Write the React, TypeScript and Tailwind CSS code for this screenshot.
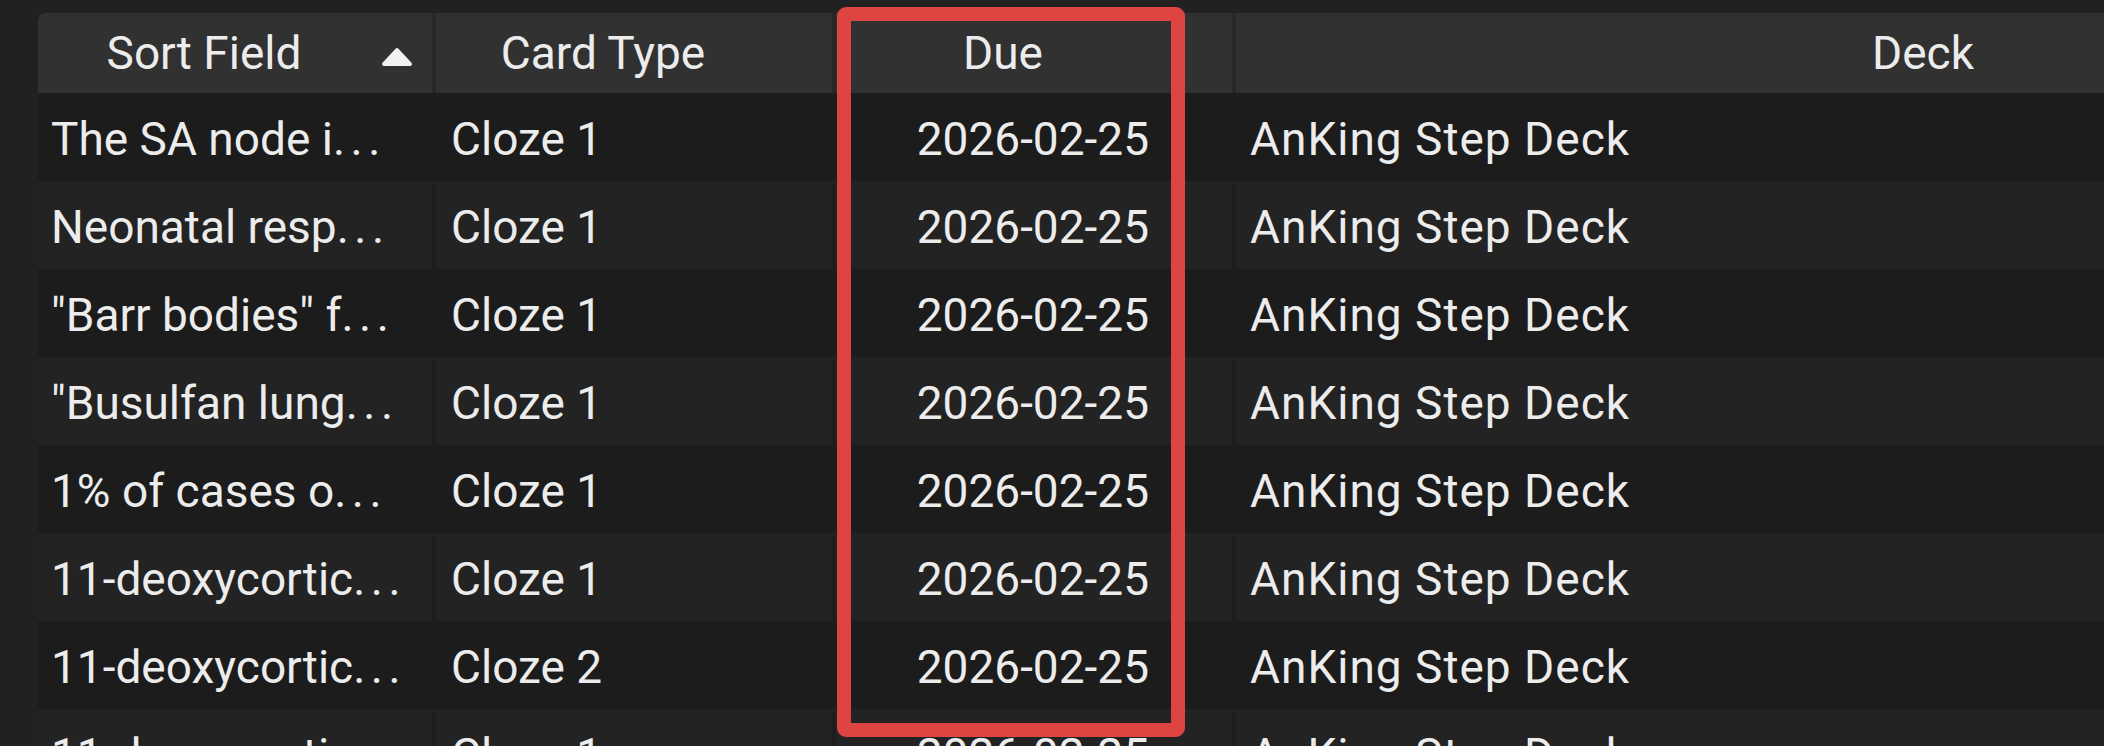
import React from 'react';

type Row = { sort: string; type: string; due: string; deck: string };

const rows: Row[] = [
  { sort: 'The SA node i', type: 'Cloze 1', due: '2026-02-25', deck: 'AnKing Step Deck' },
  { sort: 'Neonatal resp', type: 'Cloze 1', due: '2026-02-25', deck: 'AnKing Step Deck' },
  { sort: '"Barr bodies" f', type: 'Cloze 1', due: '2026-02-25', deck: 'AnKing Step Deck' },
  { sort: '"Busulfan lung', type: 'Cloze 1', due: '2026-02-25', deck: 'AnKing Step Deck' },
  { sort: '1% of cases o', type: 'Cloze 1', due: '2026-02-25', deck: 'AnKing Step Deck' },
  { sort: '11-deoxycortic', type: 'Cloze 1', due: '2026-02-25', deck: 'AnKing Step Deck' },
  { sort: '11-deoxycortic', type: 'Cloze 2', due: '2026-02-25', deck: 'AnKing Step Deck' },
  { sort: '11-deoxycortic', type: 'Cloze 1', due: '2026-02-25', deck: 'AnKing Step Deck' },
];

const font = { fontFamily: 'Roboto, "Liberation Sans", sans-serif' };

const SortArrow = () => (
  <svg width="34" height="22" viewBox="0 0 34 22" className="absolute right-[18px] top-[33px]" aria-hidden="true">
    <polygon points="17,4 30,18 4,18" fill="#f2f2f2" stroke="#f2f2f2" strokeWidth="4" strokeLinejoin="round" />
  </svg>
);

export default function App() {
  return (
    <div className="relative w-[2104px] h-[746px] overflow-hidden bg-[#212121] text-[#ececec] text-[46px]" style={font}>
      <div className="pt-[13px] pl-[38px]">
        {/* header */}
        <div className="flex h-[80px] bg-[#313131] rounded-tl-lg">
          <div className="relative w-[398px] shrink-0 flex items-center justify-center pr-[62px] border-r-[4px] border-[#272727]">
            Sort Field
            <SortArrow />
          </div>
          <div className="w-[400px] shrink-0 flex items-center justify-center pr-[62px] border-r-[4px] border-[#272727]">
            Card Type
          </div>
          <div className="w-[400px] shrink-0 flex items-center justify-center pr-[62px] border-r-[4px] border-[#272727]">
            Due
          </div>
          <div className="w-[1436px] shrink-0 flex items-center justify-center pr-[62px]">
            Deck
          </div>
        </div>

        {/* rows */}
        {rows.map((r, i) => (
          <div key={i} className={`flex h-[88px] pt-[4px] ${i % 2 === 1 ? 'bg-[#232323]' : 'bg-[#1c1c1c]'}`}>
            <div className="w-[398px] shrink-0 flex items-center pl-[13px] border-r-[4px] border-[#1d1d1d] whitespace-nowrap overflow-hidden">
              {r.sort}
              <span className="tracking-[0.12em]">...</span>
            </div>
            <div className="w-[400px] shrink-0 flex items-center pl-[15px] border-r-[4px] border-[#1d1d1d] whitespace-nowrap">
              {r.type}
            </div>
            <div className="w-[400px] shrink-0 flex items-center justify-end pr-[83px] border-r-[4px] border-[#1d1d1d] whitespace-nowrap">
              {r.due}
            </div>
            <div className="w-[1436px] shrink-0 flex items-center pl-[14px] tracking-[1px] whitespace-nowrap">
              {r.deck}
            </div>
          </div>
        ))}
      </div>

      {/* highlight around the Due column */}
      <div className="absolute left-[837px] top-[7px] w-[348px] h-[730px] border-[14px] border-[#de4441] rounded-[9px]" />
    </div>
  );
}
